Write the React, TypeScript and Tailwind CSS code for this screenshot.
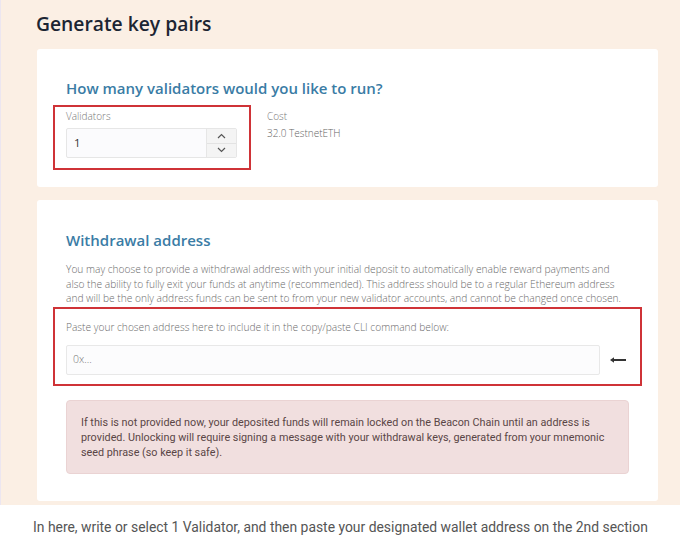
export default function App() {
  return (
    <div className="w-[680px] h-[535px] overflow-hidden bg-white font-['Open_Sans',sans-serif]">
      <div className="relative h-[505px] bg-[#fbefe4] pl-[36px] pr-[22px] pt-[9px] border-l border-[#ece6f0]">
        <h1 className="ml-[-1px] text-[19.3px] font-semibold leading-[30px] text-[#1c2533]">
          Generate key pairs
        </h1>

        <section className="relative mt-[10px] h-[138px] rounded-[3px] bg-white pl-[29px] pt-[27px]">
          <h2 className="text-[15px] font-semibold leading-[24px] text-[#3a7ca5]">
            How many validators would you like to run?
          </h2>
          <div className="mt-[7px] flex gap-[30px]">
            <div>
              <div className="text-[10px] font-light leading-[18px] text-[#777]">Validators</div>
              <div className="mt-[3px] flex h-[30px] w-[171px] rounded-[2px] border border-[#e6e6e6] bg-[#fbfbfd]">
                <div className="flex flex-1 items-center pl-[7px] text-[11.5px] text-[#333]">1</div>
                <div className="flex w-[30px] flex-col border-l border-[#e6e6e6] bg-[#f4f4f4]">
                  <div className="flex flex-1 items-center justify-center border-b border-[#e3e3e3]">
                    <svg width="9" height="6" viewBox="0 0 9 6" fill="none" stroke="#555" strokeWidth="1.2">
                      <path d="M1 5 L4.5 1.5 L8 5" />
                    </svg>
                  </div>
                  <div className="flex flex-1 items-center justify-center">
                    <svg width="9" height="6" viewBox="0 0 9 6" fill="none" stroke="#555" strokeWidth="1.2">
                      <path d="M1 1 L4.5 4.5 L8 1" />
                    </svg>
                  </div>
                </div>
              </div>
            </div>
            <div>
              <div className="text-[10px] font-light leading-[18px] text-[#777]">Cost</div>
              <div className="text-[10px] font-light leading-[16px] text-[#666]">32.0 TestnetETH</div>
            </div>
          </div>
          <div className="absolute left-[16px] top-[56px] h-[65px] w-[198px] border-[2px] border-[#cf3337]" />
        </section>

        <section className="relative mt-[13px] h-[301px] rounded-[3px] bg-white pl-[29px] pr-[29px] pt-[28px]">
          <h2 className="text-[15px] font-semibold leading-[24px] text-[#3a7ca5]">
            Withdrawal address
          </h2>
          <p className="mt-[10px] w-[562px] text-[10.2px] font-light leading-[14.5px] text-[#6b6b6b]">
            You may choose to provide a withdrawal address with your initial deposit to automatically enable reward payments and also the ability to fully exit your funds at anytime (recommended). This address should be to a regular Ethereum address and will be the only address funds can be sent to from your new validator accounts, and cannot be changed once chosen.
          </p>
          <div className="mt-[13px] text-[10.2px] font-light leading-[16px] text-[#6b6b6b]">
            Paste your chosen address here to include it in the copy/paste CLI command below:
          </div>
          <div className="mt-[10px] flex items-center">
            <div className="flex h-[30px] w-[534px] items-center rounded-[2px] border border-[#e8e8e8] bg-[#fcfcfd] pl-[6px] text-[10.5px] font-light text-[#777]">
              0x...
            </div>
            <svg className="ml-[10px]" width="17" height="6" viewBox="0 0 17 6">
              <path d="M3 3 H16" stroke="#333" strokeWidth="2" />
              <path d="M0 3 L4 0.2 L4 5.8 Z" fill="#333" />
            </svg>
          </div>
          <div className="mt-[25px] h-[74px] w-[563px] rounded-[4px] border border-[#ead3d3] bg-[#f1dfdf] pl-[14px] pr-[8px] pt-[14px] font-['Roboto',sans-serif] text-[10.8px] leading-[15px] text-[#5a4646]">
            If this is not provided now, your deposited funds will remain locked on the Beacon Chain until an address is provided. Unlocking will require signing a message with your withdrawal keys, generated from your mnemonic seed phrase (so keep it safe).
          </div>
          <div className="absolute left-[16px] top-[107px] h-[79px] w-[589px] border-[2px] border-[#cf3337]" />
        </section>
      </div>
      <p className="pl-[33px] pt-[13px] font-['Roboto',sans-serif] text-[13.9px] leading-[18px] text-[#555]">
        In here, write or select 1 Validator, and then paste your designated wallet address on the 2nd section
      </p>
    </div>
  );
}
